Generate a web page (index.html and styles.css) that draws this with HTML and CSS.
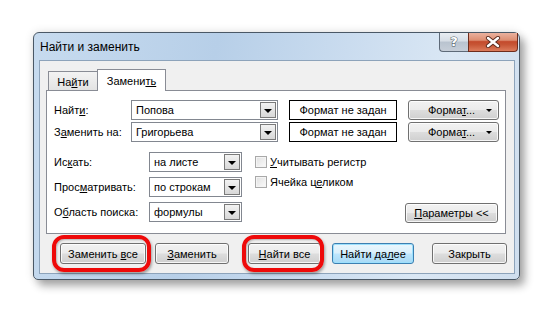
FILE: index.html
```html
<!DOCTYPE html>
<html lang="ru">
<head>
<meta charset="utf-8">
<title>Найти и заменить</title>
<link rel="stylesheet" href="styles.css">
</head>
<body>
<div class="window">
  <div class="titlebar">
    <span class="title">Найти и заменить</span>
    <div class="caption-btns">
      <div class="cbtn help"><span class="qmark">?</span></div>
      <div class="cbtn close">
        <svg width="16" height="12" viewBox="0 0 16 12"><path d="M3 2 L13 10 M13 2 L3 10" stroke="#5a2a1e" stroke-width="4.2" stroke-linecap="round"/><path d="M3 2 L13 10 M13 2 L3 10" stroke="#ffffff" stroke-width="2.4" stroke-linecap="round"/></svg>
      </div>
    </div>
  </div>
  <div class="client">
    <div class="tabs">
      <div class="tab"><span>На<u>й</u>ти</span></div>
      <div class="tab active"><span>Замени<u>ть</u></span></div>
    </div>
    <div class="panel">
      <div class="grid-top">
        <span class="lbl">Найт<u>и</u>:</span>
        <div class="combo"><span class="val">Попова</span><span class="drop"><i class="tri"></i></span></div>
        <div class="fmtbox"><span>Формат не задан</span></div>
        <div class="btn fmtbtn"><span>Форма<u>т</u>...</span><i class="tri small"></i></div>

        <span class="lbl">З<u>а</u>менить на:</span>
        <div class="combo"><span class="val">Григорьева</span><span class="drop"><i class="tri"></i></span></div>
        <div class="fmtbox"><span>Формат не задан</span></div>
        <div class="btn fmtbtn"><span>Форма<u>т</u>...</span><i class="tri small"></i></div>
      </div>
      <div class="lower">
        <div class="grid-opts">
          <span class="lbl">Ис<u>к</u>ать:</span>
          <div class="combo"><span class="val">на листе</span><span class="drop"><i class="tri"></i></span></div>
          <span class="lbl">Прос<u>м</u>атривать:</span>
          <div class="combo"><span class="val">по строкам</span><span class="drop"><i class="tri"></i></span></div>
          <span class="lbl">О<u>б</u>ласть поиска:</span>
          <div class="combo"><span class="val">формулы</span><span class="drop"><i class="tri"></i></span></div>
        </div>
        <div class="checks">
          <div class="check"><span class="box"></span><span><u>У</u>читывать регистр</span></div>
          <div class="check"><span class="box"></span><span>Ячейка ц<u>е</u>ликом</span></div>
        </div>
        <div class="btn params"><span><u>П</u>араметры &lt;&lt;</span></div>
      </div>
    </div>
    <div class="actions">
      <div class="btn act w-replall ring ring-a"><span>Заменить <u>в</u>се</span></div>
      <div class="btn act w-repl"><span><u>З</u>аменить</span></div>
      <div class="btn act w-findall ring ring-b"><span><u>Н</u>айти все</span></div>
      <div class="btn act w-findnext default"><span>Найти да<u>л</u>ее</span></div>
      <div class="btn act w-close"><span>Закрыть</span></div>
    </div>
  </div>
</div>
</body>
</html>
```
FILE: styles.css
```css
* { box-sizing: border-box; }
html, body { margin: 0; padding: 0; }
body {
  width: 553px;
  height: 313px;
  background: #ffffff;
  font-family: "Liberation Sans", Arial, sans-serif;
  font-size: 11px;
  color: #000;
  overflow: hidden;
}
u { text-decoration: underline; text-underline-offset: 1px; }

.window {
  margin: 32px 0 0 33px;
  width: 487px;
  height: 248px;
  border: 1px solid #4a5866;
  border-radius: 6px 6px 5px 5px;
  background: linear-gradient(100deg, #c7dbef 0%, #b7cfe8 35%, #cadcef 60%, #dae7f4 80%, #cfdeee 100%);
  box-shadow: 0 0 10px rgba(0,0,0,0.12), 5px 6px 9px rgba(0,0,0,0.32);
  display: flex;
  flex-direction: column;
}

.titlebar {
  height: 27px;
  display: flex;
  justify-content: space-between;
  align-items: flex-start;
}
.title {
  font-size: 12px;
  padding: 7px 0 0 6px;
  color: #000;
}
.caption-btns {
  display: flex;
  margin-right: 1px;
}
.cbtn {
  height: 19px;
  display: flex;
  align-items: center;
  justify-content: center;
  border: 1px solid #5e6a78;
  border-top: none;
}
.help {
  width: 29px;
  border-radius: 0 0 0 4px;
  border-right: none;
  background: linear-gradient(#e8edf2 0%, #d6dde5 45%, #b9c3cf 50%, #c6ced8 100%);
}
.qmark {
  font-family: "DejaVu Sans", sans-serif;
  font-weight: bold;
  font-size: 13px;
  color: #fff;
  -webkit-text-stroke: 1px #4b5560;
  paint-order: stroke fill;
  margin-top: -1px;
}
.close {
  width: 50px;
  border-radius: 0 0 4px 0;
  border-color: #6e2c1c;
  background: linear-gradient(#eab19e 0%, #dd8e72 40%, #c44a2c 48%, #c75535 65%, #dc7c5c 100%);
}

.client {
  flex: 1;
  margin: 0 4px 5px 5px;
  border: 1px solid #8da3ba;
  background: #f0f0f0;
  padding: 8px 0 0 6px;
}

.tabs {
  display: flex;
  align-items: flex-end;
  height: 21px;
  padding-left: 2px;
}
.tab {
  height: 19px;
  border: 1px solid #898c95;
  border-bottom: none;
  background: linear-gradient(#f3f3f3, #e3e3e3);
  display: flex;
  align-items: center;
  justify-content: center;
  width: 50px;
  padding-top: 1px;
}
.tab.active {
  height: 22px;
  width: 69px;
  background: #fff;
  margin-bottom: -1px;
  margin-left: -1px;
  position: relative;
  z-index: 1;
  padding-top: 0;
}

.panel {
  width: 460px;
  height: 144px;
  border: 1px solid #898c95;
  background: #fff;
  padding: 9px 0 0 7px;
}

.grid-top {
  display: grid;
  grid-template-columns: 77px 147px 119px 102px;
  grid-auto-rows: 20px;
  row-gap: 2px;
  align-items: center;
}
.grid-top .fmtbox { margin-left: 11px; }
.grid-top .fmtbtn { margin-left: 11px; }

.lbl { white-space: nowrap; }

.combo {
  height: 20px;
  border: 1px solid #828790;
  background: #fff;
  display: flex;
  align-items: center;
  justify-content: space-between;
  padding: 1px 1px 1px 4px;
}
.val { white-space: nowrap; }
.drop {
  width: 16px;
  height: 16px;
  border: 1px solid #7a7a7a;
  background: linear-gradient(#f2f2f2, #d8d8d8);
  display: flex;
  align-items: center;
  justify-content: center;
}
.tri {
  width: 0; height: 0;
  border-left: 4px solid transparent;
  border-right: 4px solid transparent;
  border-top: 4px solid #000;
  margin-top: 1px;
}
.tri.small {
  border-left-width: 3px;
  border-right-width: 3px;
  border-top-width: 3px;
}

.fmtbox {
  height: 20px;
  border: 1px solid #000;
  background: #fff;
  display: flex;
  align-items: center;
  justify-content: center;
}

.btn {
  height: 21px;
  border: 1px solid #707070;
  border-radius: 3px;
  background: linear-gradient(#f2f2f2 0%, #ebebeb 48%, #dddddd 52%, #cfcfcf 100%);
  box-shadow: inset 0 0 0 1px rgba(255,255,255,0.8);
  display: flex;
  align-items: center;
  justify-content: center;
  white-space: nowrap;
}
.fmtbtn {
  height: 20px;
  justify-content: space-between;
  padding: 0 6px 0 19px;
}

.lower {
  display: flex;
  align-items: flex-start;
  margin-top: 10px;
}
.grid-opts {
  display: grid;
  grid-template-columns: 95px 93px;
  grid-auto-rows: 20px;
  row-gap: 5px;
  align-items: center;
}
.checks {
  margin-left: 13px;
  display: flex;
  flex-direction: column;
}
.check {
  height: 20px;
  display: flex;
  align-items: center;
  gap: 3px;
}
.box {
  width: 12px;
  height: 12px;
  border: 1px solid #a9a9a9;
  background: linear-gradient(135deg, #e0e0e0, #fbfbfb);
  box-shadow: inset 0 0 0 1px #f4f4f4;
}
.params {
  margin-left: auto;
  margin-right: 7px;
  margin-top: 51px;
  width: 93px;
  height: 20px;
}

.actions {
  display: flex;
  margin-top: 9px;
  padding-left: 14px;
}
.act { position: relative; }
.w-replall { width: 86px; }
.w-repl { width: 74px; margin-left: 9px; }
.w-findall { width: 73px; margin-left: 19px; }
.w-findnext { width: 82px; margin-left: 11px; }
.w-close { width: 75px; margin-left: 18px; }
.default {
  border-color: #3c7fb1;
  background: linear-gradient(#eaf6fd 0%, #d9f0fc 48%, #bee6fd 52%, #a7d9f5 100%);
  box-shadow: inset 0 0 0 1px #9ce0fd;
}

.ring::after {
  content: "";
  position: absolute;
  border: 4px solid #ee0a0a;
  border-radius: 12px;
  box-shadow: 1px 2px 3px rgba(0,0,0,0.35), inset 1px 1px 2px rgba(0,0,0,0.25);
  pointer-events: none;
}
.ring-a::after { left: -9px; right: -6px; top: -9px; bottom: -9px; }
.ring-b::after { left: -7px; right: -4px; top: -9px; bottom: -9px; }
```
